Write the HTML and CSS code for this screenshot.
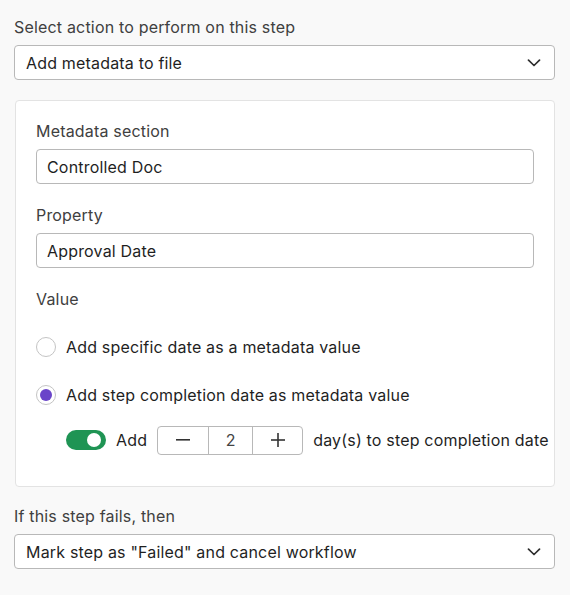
FILE: index.html
```html
<!DOCTYPE html>
<html>
<head>
<meta charset="utf-8">
<link rel="stylesheet" href="styles.css">
</head>
<body>
<div class="page">
  <div class="label">Select action to perform on this step</div>
  <div class="select">
    <span>Add metadata to file</span>
    <svg class="chev" width="14" height="8" viewBox="0 0 14 8"><path d="M1.5 1.2l5.5 5.3 5.5-5.3" fill="none" stroke="#2e2e2e" stroke-width="1.7" stroke-linecap="round" stroke-linejoin="round"/></svg>
  </div>

  <div class="card">
    <div class="label">Metadata section</div>
    <div class="input">Controlled Doc</div>
    <div class="label gap">Property</div>
    <div class="input">Approval Date</div>
    <div class="label gap">Value</div>

    <div class="radio-row first">
      <span class="radio"></span>
      <span class="rtext">Add specific date as a metadata value</span>
    </div>
    <div class="radio-row second">
      <span class="radio checked"></span>
      <span class="rtext">Add step completion date as metadata value</span>
    </div>

    <div class="add-row">
      <span class="toggle"><span class="knob"></span></span>
      <span class="add">Add</span>
      <div class="stepper">
        <span class="seg minus"><svg width="14" height="2" viewBox="0 0 14 2"><rect width="14" height="1.6" fill="#333"/></svg></span>
        <span class="seg val">2</span>
        <span class="seg plus"><svg width="14" height="14" viewBox="0 0 14 14"><rect x="0" y="6.2" width="14" height="1.6" fill="#333"/><rect x="6.2" y="0" width="1.6" height="14" fill="#333"/></svg></span>
      </div>
      <span class="days">day(s) to step completion date</span>
    </div>
  </div>

  <div class="label fail">If this step fails, then</div>
  <div class="select">
    <span>Mark step as "Failed" and cancel workflow</span>
    <svg class="chev" width="14" height="8" viewBox="0 0 14 8"><path d="M1.5 1.2l5.5 5.3 5.5-5.3" fill="none" stroke="#2e2e2e" stroke-width="1.7" stroke-linecap="round" stroke-linejoin="round"/></svg>
  </div>
</div>
</body>
</html>
```

FILE: styles.css
```css
html, body {
  margin: 0;
  padding: 0;
  background: #f9f9f9;
}
body {
  font-family: Inter, "Noto Sans", sans-serif;
  font-size: 16px;
  letter-spacing: 0.18px;
  color: #1f1f1f;
}
.page {
  padding: 17px 15px 0 14px;
}
.label {
  color: #404040;
  line-height: 20px;
  height: 20px;
  margin-bottom: 8px;
}
.label.gap {
  margin-top: 21px;
}
.select {
  height: 35px;
  box-sizing: border-box;
  border: 1px solid #b8b8b8;
  border-radius: 4px;
  background: #fff;
  display: flex;
  align-items: center;
  justify-content: space-between;
  padding: 0 13px 0 11px;
  color: #1f1f1f;
}
.chev {
  display: block;
}
.card {
  margin-top: 20px;
  margin-left: 1px;
  background: #fff;
  border: 1px solid #e3e3e3;
  border-radius: 4px;
  padding: 20px 20px 31px 20px;
}
.input {
  height: 35px;
  box-sizing: border-box;
  border: 1px solid #b8b8b8;
  border-radius: 4px;
  background: #fff;
  display: flex;
  align-items: center;
  padding: 0 10px;
  color: #1f1f1f;
}
.radio-row {
  display: flex;
  align-items: center;
  height: 20px;
}
.radio-row.first {
  margin-top: 28px;
}
.radio-row.second {
  margin-top: 28px;
}
.radio {
  flex-shrink: 0;
  width: 20px;
  height: 20px;
  box-sizing: border-box;
  border: 1px solid #c4c4c4;
  border-radius: 50%;
  background: #fff;
  margin-right: 10px;
  position: relative;
}
.radio.checked::after {
  content: "";
  position: absolute;
  left: 3px;
  top: 3px;
  width: 12px;
  height: 12px;
  border-radius: 50%;
  background: #6a45c9;
}
.rtext {
  color: #1f1f1f;
}
.add-row {
  display: flex;
  align-items: center;
  margin-top: 20px;
  margin-left: 30px;
  height: 30px;
}
.add-row > * {
  flex-shrink: 0;
}
.toggle {
  width: 40px;
  height: 20px;
  border-radius: 10px;
  background: #1f9454;
  position: relative;
  margin-right: 10px;
}
.knob {
  position: absolute;
  right: 5px;
  top: 3px;
  width: 14px;
  height: 14px;
  border-radius: 50%;
  background: #fff;
}
.add {
  margin-right: 10px;
}
.stepper {
  display: flex;
  height: 29px;
  box-sizing: border-box;
  border: 1px solid #b8b8b8;
  border-radius: 4px;
  background: #fff;
  margin-right: 10px;
}
.seg {
  display: flex;
  align-items: center;
  justify-content: center;
}
.seg.minus {
  width: 50px;
  border-right: 1px solid #b8b8b8;
}
.seg.val {
  width: 43px;
  border-right: 1px solid #b8b8b8;
  color: #444;
}
.seg.plus {
  width: 49px;
}
.days {
  color: #1f1f1f;
  white-space: nowrap;
}
.label.fail {
  margin-top: 19px;
}
```
